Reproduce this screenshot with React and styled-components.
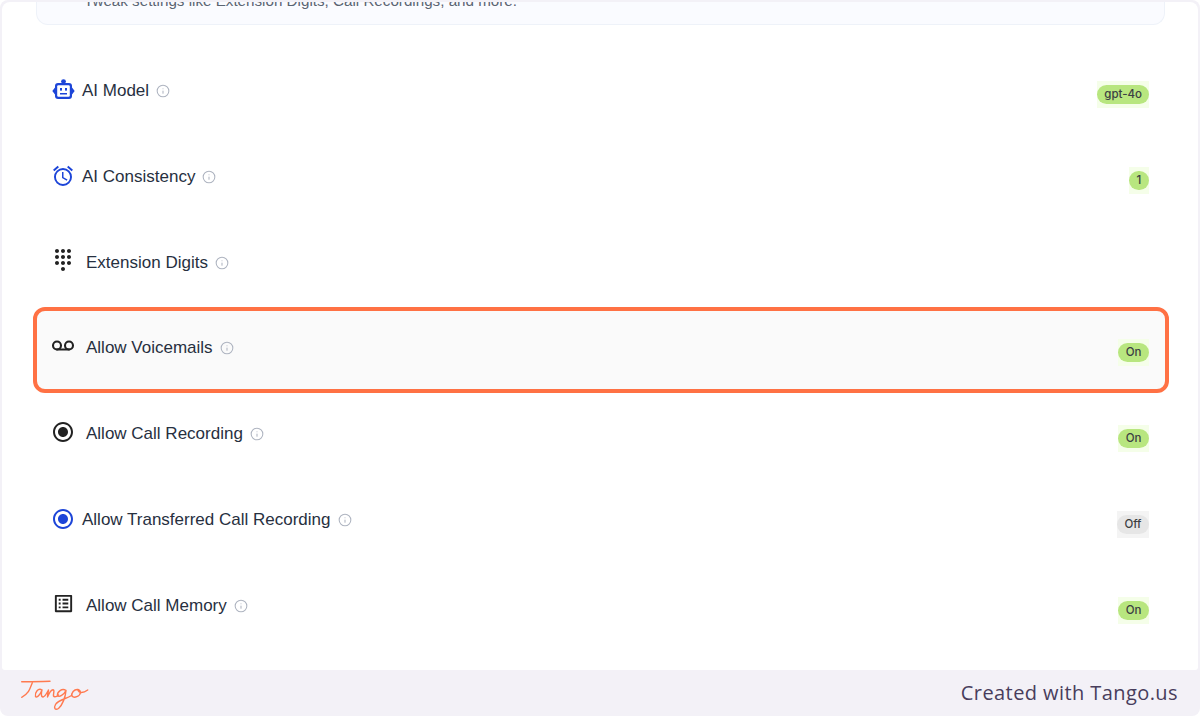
import React from "react";
import styled, { createGlobalStyle } from "styled-components";
import { Info, Voicemail } from "lucide-react";
import { MdDialpad, MdRadioButtonChecked, MdOutlineAlarm, MdOutlineListAlt } from "react-icons/md";

const Global = createGlobalStyle`
  html, body { margin: 0; padding: 0; background: #fff; }
  body { font-family: "Liberation Sans", Arial, sans-serif; }
`;

const Page = styled.div`
  width: 1200px;
  height: 716px;
  display: flex;
  flex-direction: column;
  overflow: hidden;
  background: #f3f1f7;
  border-radius: 8px;
`;

const Panel = styled.main`
  height: 668px;
  margin: 2px 2px 0;
  background: #fff;
  border-radius: 8px 8px 3px 3px;
  display: flex;
  flex-direction: column;
  flex-shrink: 0;
  overflow: hidden;
`;

const Notice = styled.div`
  height: 23px;
  margin: 0 33px 0 34px;
  box-sizing: border-box;
  padding-left: 47px;
  background: #fafbff;
  border: 1px solid #eef2f9;
  border-top: 0;
  border-radius: 0 0 12px 12px;
  display: flex;
  align-items: flex-end;
  flex-shrink: 0;
`;

const NoticeText = styled.p`
  margin: 0 0 13px;
  font-size: 15.2px;
  line-height: 20px;
  color: #5b6472;
  white-space: nowrap;
`;

const List = styled.div`
  padding: 24px 29px 0 31px;
  display: flex;
  flex-direction: column;
`;

const Row = styled.div`
  height: 86px;
  box-sizing: border-box;
  border: 4px solid ${(p) => (p.$active ? "#ff7144" : "transparent")};
  border-radius: 12px;
  background: ${(p) => (p.$active ? "#fafafa" : "transparent")};
  padding: 0 16px 0 14px;
  display: flex;
  justify-content: space-between;
  align-items: flex-start;
`;

const Label = styled.div`
  display: flex;
  align-items: center;
  height: 20px;
  margin-top: ${(p) => (p.$lift ? 27 : 28)}px;
`;

const IconSlot = styled.span`
  width: 24px;
  height: 24px;
  margin-right: ${(p) => p.$gap}px;
  margin-top: ${(p) => p.$nudge}px;
  display: flex;
  align-items: center;
  justify-content: center;
  color: ${(p) => (p.$blue ? "#1d45d8" : "#222222")};
  flex-shrink: 0;
`;

const Name = styled.span`
  font-size: 17px;
  line-height: 20px;
  color: #27303f;
  white-space: nowrap;
`;

const InfoMark = styled(Info)`
  margin-left: 7px;
  color: #aeb4c0;
  flex-shrink: 0;
`;

const BadgeHalo = styled.div`
  margin-top: 28px;
  height: 27px;
  display: flex;
  align-items: center;
  background: ${(p) => (p.$off ? "#f4f4f4" : "#f5fee9")};
`;

const Badge = styled.span`
  min-width: 20px;
  height: 19px;
  box-sizing: border-box;
  padding: 0 ${(p) => p.$pad}px;
  border-radius: 10px;
  background: ${(p) => (p.$off ? "#e6e6e6" : "#b8e67f")};
  color: #3c4043;
  font-family: Inter, sans-serif;
  font-weight: 500;
  font-size: 11.5px;
  line-height: 19px;
  text-align: center;
`;

const Footer = styled.footer`
  flex: 1;
  display: flex;
  align-items: center;
  justify-content: space-between;
  padding: 0 22px 2px 20px;
`;

const FooterText = styled.span`
  font-family: "Open Sans", sans-serif;
  font-size: 20px;
  color: #483d5c;
  letter-spacing: 0.42px;
`;

const Robot = () => (
  <svg width="23" height="21" viewBox="0 0 23 21" fill="currentColor">
    <circle cx="11.5" cy="2.6" r="2.4" />
    <rect x="3" y="4" width="17" height="16" rx="3" />
    <path d="M3 8.5 0.3 12 3 15.5ZM20 8.5 22.7 12 20 15.5Z" />
    <rect x="5.2" y="6.2" width="12.6" height="11.6" rx="1.2" fill="#fff" />
    <rect x="8" y="9" width="2" height="2.6" />
    <rect x="13" y="9" width="2" height="2.6" />
    <rect x="8" y="14" width="7" height="1.5" />
  </svg>
);

const Logo = () => (
  <svg width="70" height="40" viewBox="0 0 70 40" fill="none" stroke="#ff7a50" strokeWidth="1.4" strokeLinecap="round" strokeLinejoin="round">
    <path d="M1.7 9.7C10 9.8 20 9.6 30 9.3" />
    <path d="M12.3 10.7C11 14 10 17.5 8.3 19.7C6.5 22.3 4 24.3 1.7 25.3" />
    <path d="M22 18C18 15.5 14.5 21 15.5 24.5C17 26.5 20.5 22 22 18C21 21 21 25 23 25C25.5 24.5 27 20.5 28.5 18C28 20.5 27.5 23 27.5 25C29 21.5 31 18 33 17.8C35 18 33 22 33.5 24C34.5 25.5 37 24.5 38.5 23" />
    <path d="M46 18.5C42 15.5 37 20 37.5 23.5C39 26 44 22.5 46 18.5C45.5 25 42.5 33 38.5 36.5C35 38.5 33.5 36 35.5 32.5C38 28 46 27 51.5 23.5" />
    <path d="M58 17.5C54 17 51 21 52 24C54 26.5 60 24.5 60.5 20.5C60.5 18 58 17 58 18.5C59 21 63 21.5 67.7 18" />
  </svg>
);

const rows = [
  { name: "AI Model", icon: <Robot />, gap: 7, nudge: -3, blue: true, value: "gpt-4o", pad: 7 },
  { name: "AI Consistency", icon: <MdOutlineAlarm size={24} />, gap: 7, nudge: -3, blue: true, value: "1", pad: 0 },
  { name: "Extension Digits", icon: <MdDialpad size={24} />, gap: 11, nudge: -7 },
  { name: "Allow Voicemails", icon: <Voicemail size={25} strokeWidth={2.1} />, gap: 11, nudge: -5, lift: true, value: "On", pad: 7.5, active: true },
  { name: "Allow Call Recording", icon: <MdRadioButtonChecked size={24} />, gap: 11, nudge: -5, lift: true, value: "On", pad: 7.5 },
  { name: "Allow Transferred Call Recording", icon: <MdRadioButtonChecked size={24} />, gap: 7, nudge: -3, lift: true, blue: true, value: "Off", pad: 7.5, off: true },
  { name: "Allow Call Memory", icon: <MdOutlineListAlt size={23} />, gap: 11, nudge: -5, lift: true, value: "On", pad: 7.5 },
];

export default function App() {
  return (
    <Page>
      <Global />
      <Panel>
        <Notice>
          <NoticeText>Tweak settings like Extension Digits, Call Recordings, and more.</NoticeText>
        </Notice>
        <List>
          {rows.map((r) => (
            <Row key={r.name} $active={r.active}>
              <Label $lift={r.lift}>
                <IconSlot $gap={r.gap} $nudge={r.nudge} $blue={r.blue}>{r.icon}</IconSlot>
                <Name>{r.name}</Name>
                <InfoMark size={14} strokeWidth={1.8} />
              </Label>
              {r.value && (
                <BadgeHalo $off={r.off}>
                  <Badge $pad={r.pad} $off={r.off}>{r.value}</Badge>
                </BadgeHalo>
              )}
            </Row>
          ))}
        </List>
      </Panel>
      <Footer>
        <Logo />
        <FooterText>Created with Tango.us</FooterText>
      </Footer>
    </Page>
  );
}
